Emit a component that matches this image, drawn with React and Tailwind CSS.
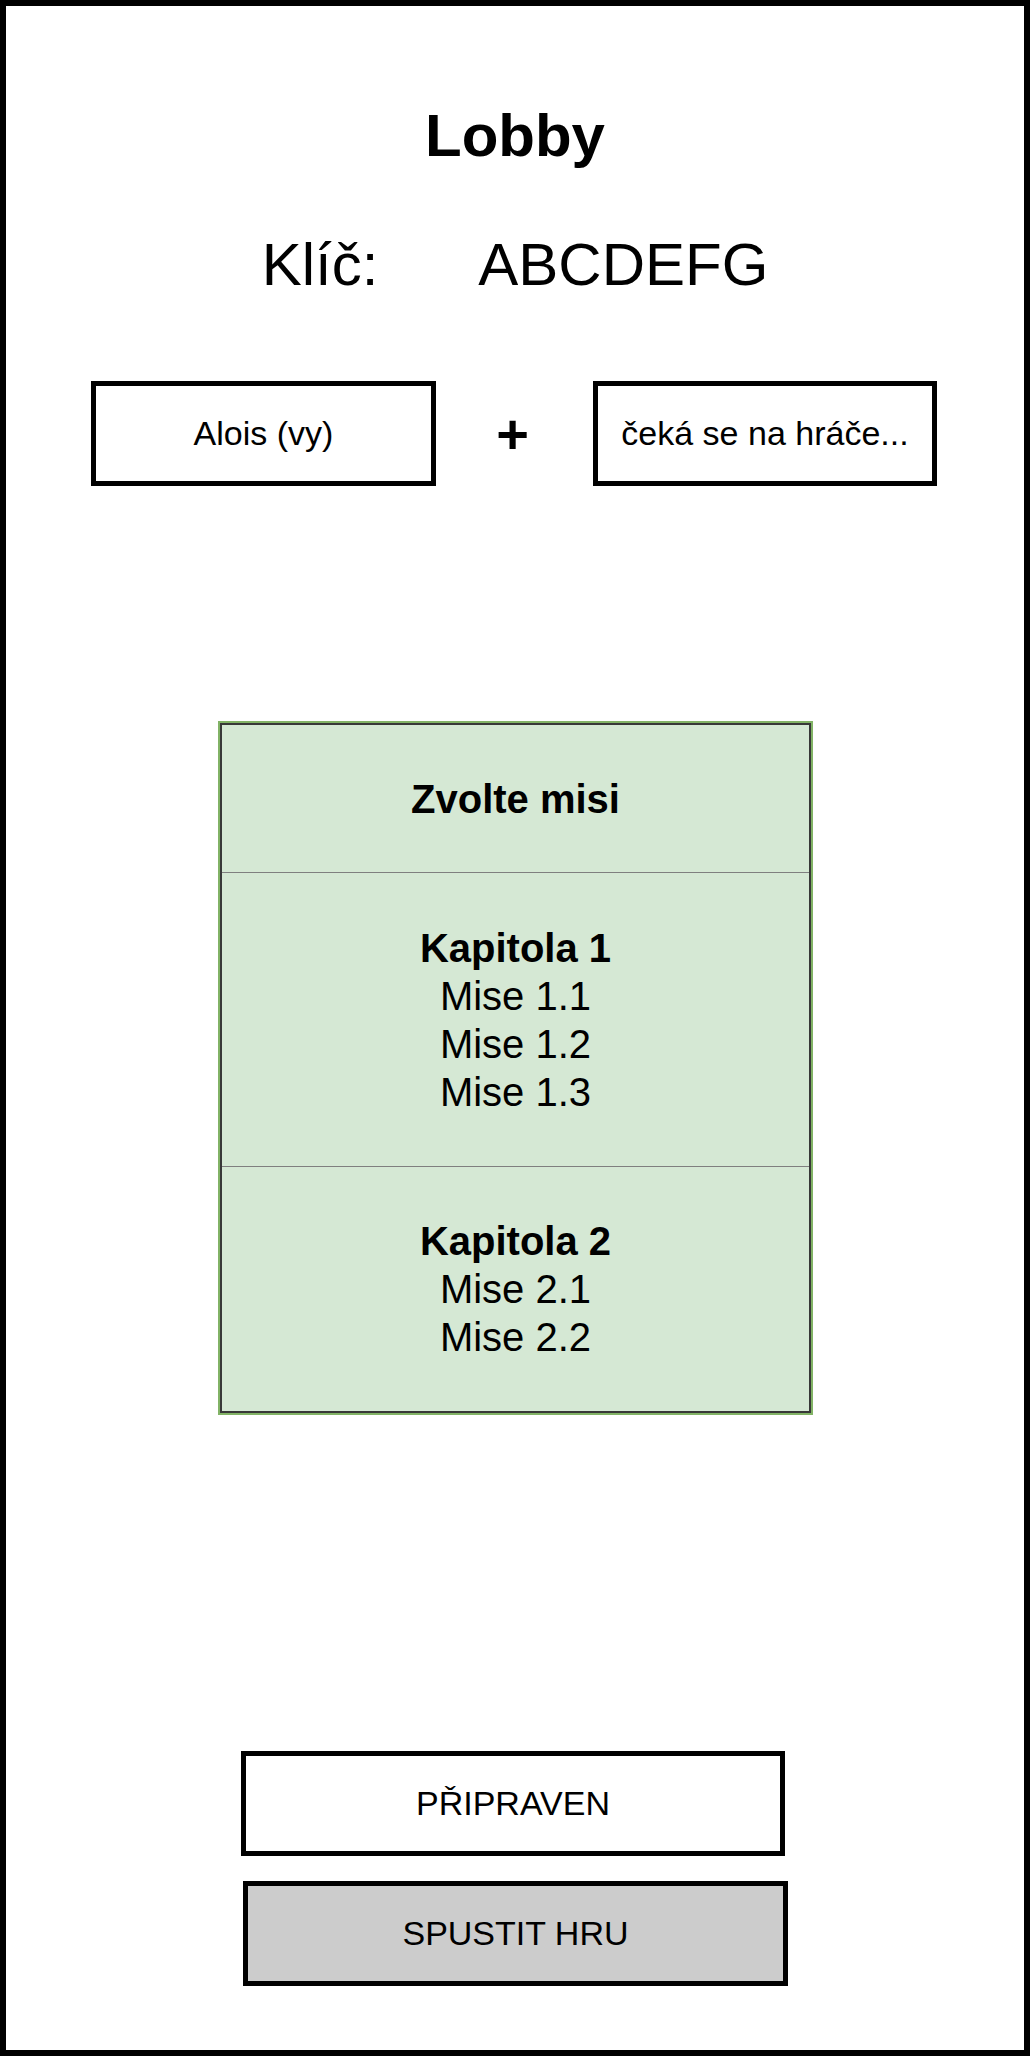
import React from "react";

const chapters = [
  { title: "Kapitola 1", missions: ["Mise 1.1", "Mise 1.2", "Mise 1.3"], h: "h-[293px]" },
  { title: "Kapitola 2", missions: ["Mise 2.1", "Mise 2.2"], h: "flex-1" },
];

const App = () => {
  return (
    <div className="w-[1030px] h-[2056px] border-[6px] border-black bg-white text-black font-['Liberation_Sans',Arial,sans-serif] flex flex-col">
      <h1 className="pt-[100px] text-[60px] leading-none font-bold text-center">Lobby</h1>

      <div className="mt-[69px] flex justify-center gap-[100px] text-[60px] leading-none">
        <span>Klíč:</span>
        <span>ABCDEFG</span>
      </div>

      <div className="mt-[86px] pl-[85px] flex items-center">
        <div className="w-[345px] h-[105px] border-[5px] border-black flex items-center justify-center text-[34px]">
          Alois (vy)
        </div>
        <div className="w-[157px] flex justify-center items-center text-[56px] leading-none font-bold pr-[4px]">+</div>
        <div className="w-[344px] h-[105px] border-[5px] border-black flex items-center justify-center text-[34px]">
          čeká se na hráče...
        </div>
      </div>

      <div className="mt-[235px] ml-[212px] w-[595px] h-[694px] border-2 border-[#82b366]">
        <div className="h-full border-2 border-[#383838] bg-[#d5e8d4] flex flex-col text-[40px] leading-[48px] text-center">
          <div className="h-[147px] flex items-center justify-center font-bold">Zvolte misi</div>
          {chapters.map((c) => (
            <React.Fragment key={c.title}>
              <div className="h-px bg-[#7f7f7f]" />
              <div className={`${c.h} flex flex-col items-center justify-center`}>
                <div className="font-bold">{c.title}</div>
                {c.missions.map((m) => (
                  <div key={m}>{m}</div>
                ))}
              </div>
            </React.Fragment>
          ))}
        </div>
      </div>

      <button className="mt-[336px] ml-[235px] w-[544px] h-[105px] border-[5px] border-black bg-white text-[34px]">
        PŘIPRAVEN
      </button>
      <button className="mt-[25px] ml-[237px] w-[545px] h-[105px] border-[5px] border-black bg-[#cccccc] text-[34px]">
        SPUSTIT HRU
      </button>
    </div>
  );
};

export default App;
